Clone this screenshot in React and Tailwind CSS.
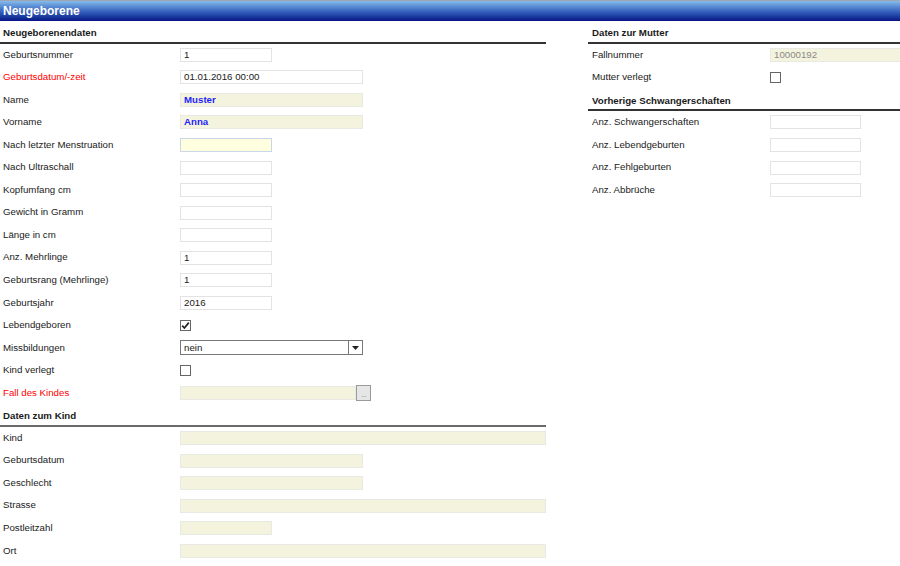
const labelTone = {
	normal: "text-[#1a1a1a]",
	red: "text-[#ff0000]",
};

const Field = ({ label, red, right, children }) => {
	return (
		<div className="flex items-center h-[22.55px]">
			<div
				className={`${right ? "w-[182px] pl-[4px]" : "w-[180px] pl-[3px]"} shrink-0 ${
					red ? labelTone.red : labelTone.normal
				} whitespace-nowrap`}
			>
				{label}
			</div>
			{children}
		</div>
	);
};

const Heading = ({ title, right, light }) => {
	return (
		<div
			className={`h-[22.55px] pt-[5px] leading-[13px] font-bold text-[#1a1a1a] border-b-2 ${
				light ? "border-[#6a6a6a]" : "border-[#333]"
			} ${right ? "pl-[4px]" : "pl-[3px]"}`}
		>
			{title}
		</div>
	);
};

// w: small | medium | wide | right
const Box = ({ w = "small", value, tone = "white", blue }) => {
	const widths = {
		small: "w-[92px]",
		medium: "w-[183px]",
		wide: "w-[366px]",
		right: "w-[91px]",
		fall: "w-[176px]",
		long: "w-[190px]",
	};
	const tones = {
		white: "bg-white border-[#e3e3e3]",
		ro: "bg-[#f4f3dd] border-[#e9e9e4]",
		yellow: "bg-[#ffffe0] border-[#c9d7e6]",
	};
	return (
		<div
			className={`${widths[w]} h-[14px] shrink-0 border ${tones[tone]} pl-[3px] leading-[12px] whitespace-nowrap ${
				blue ? "text-[#1f1fff] font-bold" : tone === "ro" ? "text-[#8a8a8a]" : "text-[#1a1a1a]"
			}`}
		>
			{value}
		</div>
	);
};

const Check = ({ checked }) => {
	return (
		<div className="w-[11px] h-[11px] border border-[#666] bg-white flex items-center justify-center">
			{checked && (
				<svg width="9" height="9" viewBox="0 0 9 9">
					<path d="M1.2 4.6 L3.4 7 L7.8 1.6" fill="none" stroke="#222" strokeWidth="1.7" />
				</svg>
			)}
		</div>
	);
};

const Select = ({ value }) => {
	return (
		<div className="w-[183px] h-[15px] border border-[#777] bg-white flex">
			<div className="flex-1 pl-[3px] leading-[13px] text-[#1a1a1a]">{value}</div>
			<div className="w-[14px] border-l border-[#777] flex items-center justify-center">
				<svg width="7" height="4" viewBox="0 0 7 4">
					<path d="M0 0 H7 L3.5 4 Z" fill="#222" />
				</svg>
			</div>
		</div>
	);
};

const App = () => {
	return (
		<div className="w-[900px] h-[566px] overflow-hidden bg-white font-['Liberation_Sans',Arial,sans-serif] text-[9.7px]">
			<div className="h-[21px] border-t border-[#9aa6b4] bg-linear-to-b from-[#86bbea] via-[#3b66c0] to-[#0a1284] pl-[3px] flex items-center">
				<span className="text-white font-bold text-[12px]">Neugeborene</span>
			</div>

			<div className="flex">
				<div className="w-[546px] shrink-0">
					<Heading title="Neugeborenendaten" />
					<Field label="Geburtsnummer">
						<Box value="1" />
					</Field>
					<Field label="Geburtsdatum/-zeit" red>
						<Box w="medium" value="01.01.2016 00:00" />
					</Field>
					<Field label="Name">
						<Box w="medium" tone="ro" value="Muster" blue />
					</Field>
					<Field label="Vorname">
						<Box w="medium" tone="ro" value="Anna" blue />
					</Field>
					<Field label="Nach letzter Menstruation">
						<Box tone="yellow" />
					</Field>
					<Field label="Nach Ultraschall">
						<Box />
					</Field>
					<Field label="Kopfumfang cm">
						<Box />
					</Field>
					<Field label="Gewicht in Gramm">
						<Box />
					</Field>
					<Field label="Länge in cm">
						<Box />
					</Field>
					<Field label="Anz. Mehrlinge">
						<Box value="1" />
					</Field>
					<Field label="Geburtsrang (Mehrlinge)">
						<Box value="1" />
					</Field>
					<Field label="Geburtsjahr">
						<Box value="2016" />
					</Field>
					<Field label="Lebendgeboren">
						<Check checked />
					</Field>
					<Field label="Missbildungen">
						<Select value="nein" />
					</Field>
					<Field label="Kind verlegt">
						<Check />
					</Field>
					<Field label="Fall des Kindes" red>
						<div className="flex items-center">
							<Box w="fall" tone="ro" />
							<div className="w-[15px] h-[16px] border border-[#9a9a9a] bg-[#e6e6e6] flex items-end justify-center pb-[2px]">
								<span className="text-[8px] leading-[6px] text-[#8a8aa0] tracking-[-0.5px]">...</span>
							</div>
						</div>
					</Field>
					<Heading title="Daten zum Kind" light />
					<Field label="Kind">
						<Box w="wide" tone="ro" />
					</Field>
					<Field label="Geburtsdatum">
						<Box w="medium" tone="ro" />
					</Field>
					<Field label="Geschlecht">
						<Box w="medium" tone="ro" />
					</Field>
					<Field label="Strasse">
						<Box w="wide" tone="ro" />
					</Field>
					<Field label="Postleitzahl">
						<Box tone="ro" />
					</Field>
					<Field label="Ort">
						<Box w="wide" tone="ro" />
					</Field>
				</div>

				<div className="ml-[42px] flex-1 min-w-0">
					<Heading title="Daten zur Mutter" right />
					<Field label="Fallnummer" right>
						<Box w="long" tone="ro" value="10000192" />
					</Field>
					<Field label="Mutter verlegt" right>
						<Check />
					</Field>
					<Heading title="Vorherige Schwangerschaften" right />
					<Field label="Anz. Schwangerschaften" right>
						<Box w="right" />
					</Field>
					<Field label="Anz. Lebendgeburten" right>
						<Box w="right" />
					</Field>
					<Field label="Anz. Fehlgeburten" right>
						<Box w="right" />
					</Field>
					<Field label="Anz. Abbrüche" right>
						<Box w="right" />
					</Field>
				</div>
			</div>
		</div>
	);
};

export default App;
